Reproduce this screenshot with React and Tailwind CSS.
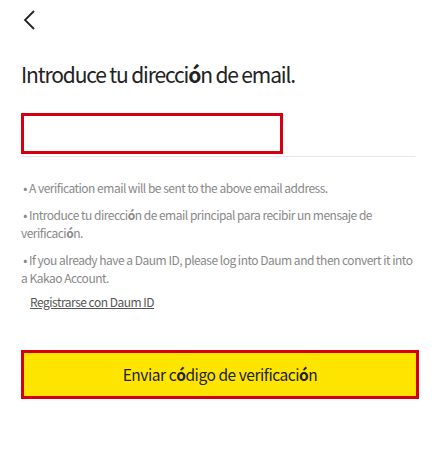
import React from 'react';

const B = ({ children }) => <span className="font-bold">{children}</span>;

export default function App() {
  return (
    <div className="w-[436px] h-[449px] bg-white overflow-hidden" style={{ fontFamily: '"Noto Sans CJK KR", "Noto Sans", sans-serif' }}>
      <div className="pl-[23px] pt-[10px]">
        <svg width="12" height="20" viewBox="0 0 12 20" fill="none" stroke="#222" strokeWidth="1.8">
          <path d="M11 1 L2 10 L11 19" />
        </svg>
      </div>

      <div className="px-[21px] pr-[18px]">
        <h1 className="mt-[28px] text-[21px] leading-[32px] text-[#222] tracking-[-1.15px]">
          Introduce tu direcci<B>ó</B>n de email.
        </h1>

        <div className="mt-[23px] border-b border-[#e6e6e6] pb-[2px] mr-[3px]">
          <div className="w-[262px] h-[41px] border-[3px] border-[#d5000c]"></div>
        </div>

        <div className="mt-[22px] text-[12px] leading-[18px] text-[#888] tracking-[-0.5px]">
          <p>&nbsp;• A verification email will be sent to the above email address.</p>
          <p className="mt-[9px]">&nbsp;• Introduce tu direcci<B>ó</B>n de email principal para recibir un mensaje de verificaci<B>ó</B>n.</p>
          <p className="mt-[9px]">&nbsp;• If you already have a Daum ID, please log into Daum and then convert it into a Kakao Account.</p>
          <p className="mt-[6px] pl-[9px]">
            <a className="underline text-[#555]">Registrarse con Daum ID</a>
          </p>
        </div>

        <button className="mt-[39px] w-[398px] h-[49px] bg-[#fee500] border-[3px] border-[#d5000c] text-[15.5px] text-[#222] flex items-center justify-center tracking-[-0.45px]">
          Enviar c<B>ó</B>digo de verificaci<B>ó</B>n
        </button>
      </div>
    </div>
  );
}
